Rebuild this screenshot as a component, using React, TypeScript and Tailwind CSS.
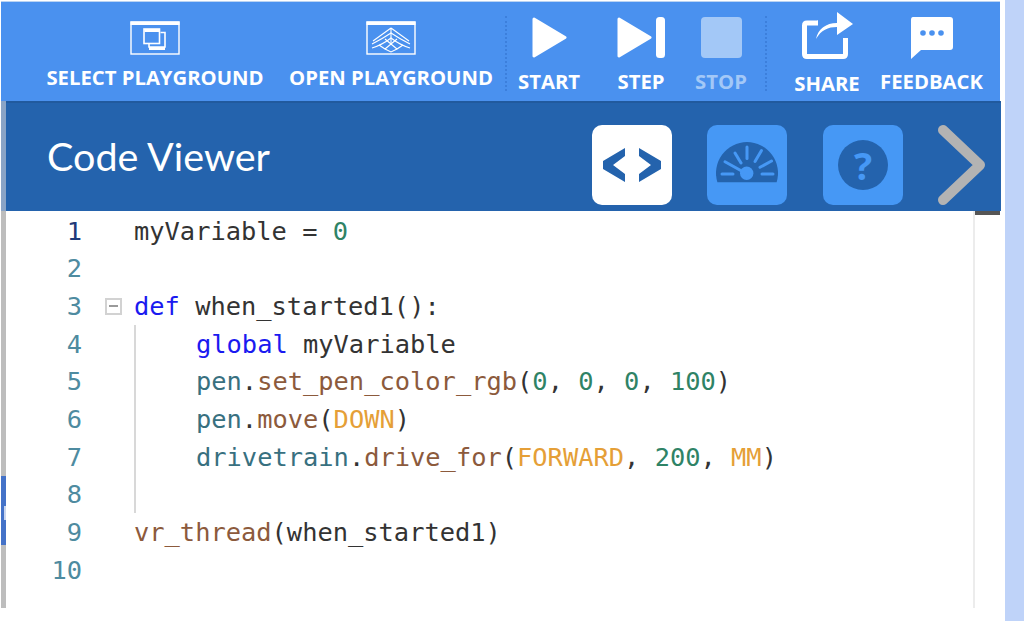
import React from 'react';

const labelClass = "font-['Open_Sans',sans-serif] font-bold text-[20.3px] leading-none whitespace-nowrap";

const SelectIcon = () => (
  <svg width="50" height="34" viewBox="0 0 50 34" fill="none" stroke="white">
    <rect x="1" y="1" width="48" height="32" strokeWidth="1.4" />
    <rect x="0.5" y="0.5" width="49" height="3.5" fill="white" stroke="none" />
    <path d="M30.5 11.5h4.5v14.5h-16v-3" strokeWidth="1.6" />
    <rect x="14" y="8" width="15.5" height="14.5" strokeWidth="1.6" />
    <rect x="14.5" y="8" width="15" height="3" fill="white" stroke="none" />
    <rect x="19" y="26" width="16" height="3" fill="white" stroke="none" />
  </svg>
);

const OpenIcon = () => (
  <svg width="50" height="34" viewBox="0 0 50 34" fill="none" stroke="white">
    <rect x="1" y="1" width="48" height="32" strokeWidth="1.4" />
    <rect x="0.5" y="0.5" width="49" height="3.5" fill="white" stroke="none" />
    <g strokeWidth="1.1">
      <path d="M25 7 L7 20 M25 7 L43 20 M25 7 V24" />
      <path d="M6 23 Q16 18 25 12 Q34 18 44 23" />
      <path d="M6 27 Q16 24 25 17 Q34 24 44 27" />
      <path d="M13 24 L19 28 L25 23 L31 28 L37 24 M19 18 L25 23 L31 18" />
      <path d="M19 28 L25 31 L31 28" />
    </g>
  </svg>
);

const PlayIcon = () => (
  <svg width="35" height="41" viewBox="0 0 35 41">
    <path d="M2 2 L33 20.5 L2 39 Z" fill="white" stroke="white" strokeWidth="3" strokeLinejoin="round" />
  </svg>
);

const StepIcon = () => (
  <svg width="48" height="41" viewBox="0 0 48 41">
    <path d="M2 2 L33 20.5 L2 39 Z" fill="white" stroke="white" strokeWidth="3" strokeLinejoin="round" />
    <rect x="39" y="0" width="9" height="41" rx="3.5" fill="white" />
  </svg>
);

const ShareIcon = () => (
  <svg width="51" height="47" viewBox="0 0 51 47">
    <path d="M16 11 H5 Q2.5 11 2.5 13.5 V42 Q2.5 44.5 5 44.5 H41 Q43.5 44.5 43.5 42 V26" fill="none" stroke="white" strokeWidth="5" />
    <path d="M16 8 L12 13 L16 13 Z" fill="white" />
    <path d="M14 27 C16 17 24 11 35 11 V0 L51 12 L35 23 V15 C26 15 19 18 14 27 Z" fill="white" />
  </svg>
);

const FeedbackIcon = () => (
  <svg width="43" height="42" viewBox="0 0 43 42">
    <path d="M3 0 H40 Q43 0 43 3 V30 Q43 33 40 33 H11 L1 42 V3 Q1 0 3 0 Z" fill="white" />
    <circle cx="13" cy="16" r="2.8" fill="#4a91ef" />
    <circle cx="22" cy="16" r="2.8" fill="#4a91ef" />
    <circle cx="31" cy="16" r="2.8" fill="#4a91ef" />
  </svg>
);

const CodeIcon = () => (
  <svg width="80" height="80" viewBox="0 0 80 80" fill="#2463ad">
    <path d="M11 36 L33 23 V31 L21 40 L33 49 V57 L11 44 Z" />
    <path d="M47 23 L69 36 V44 L47 57 V49 L59 40 L47 31 Z" />
  </svg>
);

const GaugeIcon = () => (
  <svg width="80" height="80" viewBox="0 0 80 80">
    <path d="M10.4 57.3 A31 31 0 1 1 69.6 57.3 Z" fill="#2463ad" />
    <g stroke="#4698f5" strokeWidth="3" strokeLinecap="round">
      <path d="M15 49 H26 M55 49 H66" />
      <path d="M18 36.7 L36 46.7" />
      <path d="M28 28 L34 38" />
      <path d="M40 22 V33.5" />
      <path d="M54.5 25.5 L48 36.5" />
      <path d="M64.5 36 L53 42.3" />
    </g>
    <circle cx="39.7" cy="48.3" r="6.7" fill="#4698f5" />
  </svg>
);

const Separator = () => <div className="w-0 h-[75px] mt-[14px] border-l-2 border-dotted border-[#3c7fdc]" />;

const Num = ({ children }: { children: React.ReactNode }) => <span className="text-[#2f8366]">{children}</span>;
const Kw = ({ children }: { children: React.ReactNode }) => <span className="text-[#1a1af0]">{children}</span>;
const Fn = ({ children }: { children: React.ReactNode }) => <span className="text-[#8c5a3c]">{children}</span>;
const Obj = ({ children }: { children: React.ReactNode }) => <span className="text-[#38707f]">{children}</span>;
const Const = ({ children }: { children: React.ReactNode }) => <span className="text-[#e59f37]">{children}</span>;

const lines: { code: React.ReactNode; guide?: boolean; fold?: boolean; indent?: boolean }[] = [
  { code: <>myVariable = <Num>0</Num></> },
  { code: null },
  { code: <><Kw>def</Kw> when_started1():</>, fold: true },
  { code: <><Kw>global</Kw> myVariable</>, guide: true, indent: true },
  { code: <><Obj>pen</Obj>.<Fn>set_pen_color_rgb</Fn>(<Num>0</Num>, <Num>0</Num>, <Num>0</Num>, <Num>100</Num>)</>, guide: true, indent: true },
  { code: <><Obj>pen</Obj>.<Fn>move</Fn>(<Const>DOWN</Const>)</>, guide: true, indent: true },
  { code: <><Obj>drivetrain</Obj>.<Fn>drive_for</Fn>(<Const>FORWARD</Const>, <Num>200</Num>, <Const>MM</Const>)</>, guide: true, indent: true },
  { code: null, guide: true },
  { code: <><Fn>vr_thread</Fn>(when_started1)</> },
  { code: null },
];

export default function App() {
  return (
    <div className="w-[1024px] h-[622px] overflow-hidden bg-white flex">
      <div className="w-[1001px] shrink-0 flex flex-col pt-[1px]">
        {/* Toolbar */}
        <div className="h-[100px] ml-[1px] mr-[1px] bg-[#4a91ef] border-t border-[#b9d3f3] flex text-white">
          <div className="ml-[45px] w-[218px] flex flex-col items-center pt-[19px]">
            <SelectIcon />
            <span className={`${labelClass} mt-[12px]`}>SELECT PLAYGROUND</span>
          </div>
          <div className="ml-[25px] w-[204px] flex flex-col items-center pt-[19px]">
            <OpenIcon />
            <span className={`${labelClass} mt-[12px]`}>OPEN PLAYGROUND</span>
          </div>
          <div className="ml-[12px]"><Separator /></div>
          <div className="ml-[11px] w-[62px] flex flex-col items-center pt-[15px]">
            <PlayIcon />
            <span className={`${labelClass} mt-[13px]`}>START</span>
          </div>
          <div className="ml-[37px] w-[48px] flex flex-col items-center pt-[15px]">
            <StepIcon />
            <span className={`${labelClass} mt-[13px]`}>STEP</span>
          </div>
          <div className="ml-[30px] w-[52px] flex flex-col items-center pt-[15px]">
            <div className="w-[41px] h-[41px] rounded-[4px] bg-[#a3c8f7]" />
            <span className={`${labelClass} mt-[13px] text-[#a3c8f7]`}>STOP</span>
          </div>
          <div className="ml-[18px]"><Separator /></div>
          <div className="ml-[27px] w-[66px] flex flex-col items-center pt-[10px]">
            <ShareIcon />
            <span className={`${labelClass} mt-[14px]`}>SHARE</span>
          </div>
          <div className="ml-[20px] w-[103px] flex flex-col items-center pt-[15px]">
            <FeedbackIcon />
            <span className={`${labelClass} mt-[12px]`}>FEEDBACK</span>
          </div>
        </div>

        {/* Header */}
        <div className="h-[110px] flex ml-[1px] border-l-[5px] border-[#8aa4c6]">
          <div className="flex-1 flex items-center bg-[#2463ad] border-t-2 border-[#215a9e] pl-[41px]">
            <span className="font-['Lato',sans-serif] text-[39.5px] leading-none text-white mb-[2px] w-[545px]">Code Viewer</span>
            <div className="mt-[16px] w-[80px] h-[80px] rounded-[10px] bg-white"><CodeIcon /></div>
            <div className="mt-[16px] ml-[35px] w-[80px] h-[80px] rounded-[10px] bg-[#4698f5]"><GaugeIcon /></div>
            <div className="mt-[16px] ml-[36px] w-[80px] h-[80px] rounded-[10px] bg-[#4698f5] flex items-center justify-center">
              <div className="w-[50px] h-[50px] rounded-full bg-[#2463ad] flex items-center justify-center font-['Open_Sans',sans-serif] font-bold text-[38px] leading-none text-[#4698f5]">?</div>
            </div>
            <svg className="mt-[16px] ml-[35px]" width="48" height="80" viewBox="0 0 48 80" fill="none">
              <path d="M5 5 L42 40 L5 75" stroke="#b3b3b3" strokeWidth="10" strokeLinecap="round" strokeLinejoin="round" />
            </svg>
          </div>
        </div>

        {/* Editor */}
        <div className="h-[397px] flex">
          <div className="ml-[1px] w-[5px] bg-[#bdbdbd] flex flex-col shrink-0">
            <div className="h-[265px]" />
            <div className="h-[30px] bg-[#4472c8]" />
            <div className="h-[14px] bg-[#4472c8] pl-[3px]"><div className="h-full bg-[#c9d5ee]" /></div>
            <div className="h-[25px] bg-[#4472c8]" />
          </div>
          <div className="w-[969px] border-r-2 border-[#ececec] pt-[1px] font-['DejaVu_Sans_Mono',monospace] text-[25.4px] text-[#333333]">
            {lines.map((line, i) => (
              <div key={i} className="h-[37.67px] flex items-center">
                <span className={`w-[76px] text-right shrink-0 ${i === 0 ? 'text-[#1f3a7a]' : 'text-[#4e8ba0]'}`}>{i + 1}</span>
                <div className="w-[52px] shrink-0 flex justify-end pr-[12px]">
                  {line.fold && (
                    <div className="w-[17px] h-[17px] border-2 border-[#d2d2d2] flex items-center justify-center">
                      <div className="w-[9px] h-[2px] bg-[#9a9a9a]" />
                    </div>
                  )}
                </div>
                <div className={`h-full flex items-center whitespace-pre ${line.guide ? 'border-l-2 border-[#d8d8d8]' : ''} ${line.indent ? 'pl-[60px]' : ''}`}>
                  {line.code}
                </div>
              </div>
            ))}
          </div>
          <div className="w-[25px] h-[4px] bg-[#555555]" />
        </div>
      </div>
      <div className="ml-[4px] w-[19px] h-[621px] bg-[#bfd3f9]" />
    </div>
  );
}
